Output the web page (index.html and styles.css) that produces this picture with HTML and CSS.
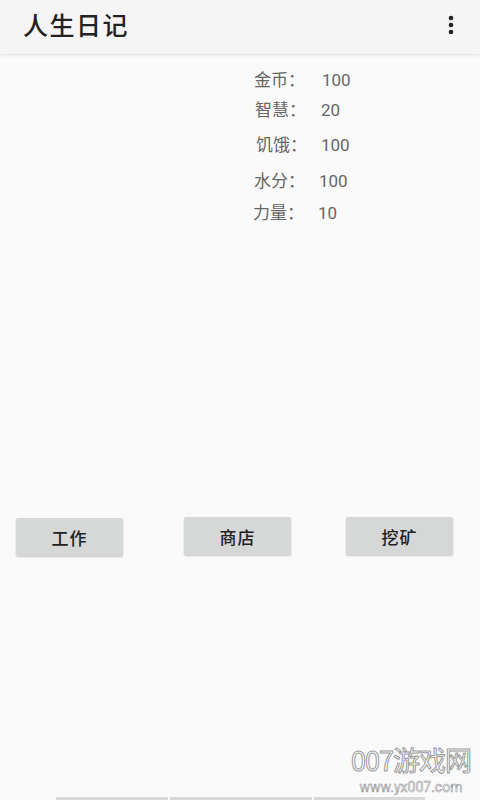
FILE: index.html
```html
<!DOCTYPE html>
<html lang="zh">
<head>
    <meta charset="UTF-8">
    <meta name="viewport" content="width=device-width, initial-scale=1.0">
    <title>人生日记</title>
    <link rel="stylesheet" href="styles.css">
</head>
<body>
    <div class="app">
        <header class="toolbar">
            <h1>人生日记</h1>
            <svg class="menu" width="6" height="20" viewBox="0 0 6 20">
                <circle cx="3" cy="3" r="2.3" fill="#222"/>
                <circle cx="3" cy="10" r="2.3" fill="#222"/>
                <circle cx="3" cy="17" r="2.3" fill="#222"/>
            </svg>
        </header>

        <main class="content">
            <div class="stats">
                <div class="stat s1"><span class="label">金币：</span><span class="value">100</span></div>
                <div class="stat s2"><span class="label">智慧：</span><span class="value">20</span></div>
                <div class="stat s3"><span class="label">饥饿：</span><span class="value">100</span></div>
                <div class="stat s4"><span class="label">水分：</span><span class="value">100</span></div>
                <div class="stat s5"><span class="label">力量：</span><span class="value">10</span></div>
            </div>

            <div class="actions">
                <button class="btn b1">工作</button>
                <button class="btn b2">商店</button>
                <button class="btn b3">挖矿</button>
            </div>
        </main>

        <div class="bottom-strip">
            <span class="seg seg1"></span>
            <span class="seg seg2"></span>
            <span class="seg seg3"></span>
        </div>

        <div class="watermark">
            <div class="wm-big">007游戏网</div>
            <div class="wm-small">www.yx007.com</div>
        </div>
    </div>
</body>
</html>
```

FILE: styles.css
```css
body {
    margin: 0;
    padding: 0;
    background-color: #fafafa;
    font-family: Roboto, "Noto Sans CJK SC", sans-serif;
}

.app {
    position: relative;
    width: 480px;
    height: 800px;
    display: flex;
    flex-direction: column;
    overflow: hidden;
}

.toolbar {
    height: 54px;
    flex-shrink: 0;
    background-color: #f5f5f5;
    box-shadow: 0 1px 3px rgba(0, 0, 0, 0.12);
    display: flex;
    align-items: center;
    justify-content: space-between;
    padding: 0 26px 0 23px;
    position: relative;
    z-index: 1;
}

.toolbar h1 {
    margin: 0;
    font-size: 25px;
    font-weight: 500;
    color: #222;
    letter-spacing: 1.5px;
    margin-top: -6px;
}

.menu {
    margin-top: -4px;
}

.content {
    flex: 1;
    display: flex;
    flex-direction: column;
}

.stats {
    display: flex;
    flex-direction: column;
    padding: 15px 0 0 254px;
    height: 448px;
}

.stat {
    display: flex;
    font-size: 17px;
    color: #666;
    line-height: 22px;
}

.label {
    width: 68px;
}

.s2 { margin-top: 8px; margin-left: 1px; }
.s2 .label { width: 66px; }
.s3 { margin-top: 13px; margin-left: 2px; }
.s3 .label { width: 65px; }
.s4 { margin-top: 14px; }
.s4 .label { width: 65px; }
.s5 { margin-top: 10px; margin-left: -1px; }
.s5 .label { width: 65px; }

.actions {
    display: flex;
    justify-content: space-between;
    padding: 0 27px 0 16px;
}

.btn {
    width: 107px;
    height: 38px;
    border: none;
    border-radius: 2px;
    background-color: #d6d7d7;
    box-shadow: 0 1px 2px rgba(0, 0, 0, 0.2);
    font-family: "Noto Sans CJK SC", sans-serif;
    font-size: 17px;
    font-weight: 500;
    color: #222;
    padding: 0;
    letter-spacing: 1px;
}

.b1 { margin-top: 1px; }
.b2 { margin-left: 6px; }

.bottom-strip {
    height: 3px;
    display: flex;
    padding-left: 56px;
    gap: 2px;
}

.seg {
    background-color: #d8d8d8;
    height: 3px;
}

.seg1 { width: 112px; }
.seg2 { width: 142px; }
.seg3 { width: 111px; }

/* watermark from the screenshot */
.watermark {
    position: absolute;
    right: 9px;
    bottom: 4px;
    display: flex;
    flex-direction: column;
    align-items: center;
    color: #fff;
    -webkit-text-stroke: 1px #9a9a9a;
}

.wm-big {
    font-family: "Noto Sans CJK SC", sans-serif;
    font-size: 27px;
    line-height: 39px;
    letter-spacing: -1px;
}

.wm-small {
    font-family: Roboto, sans-serif;
    font-size: 14px;
    line-height: 17px;
    -webkit-text-stroke: 0.6px #9a9a9a;
}
```
